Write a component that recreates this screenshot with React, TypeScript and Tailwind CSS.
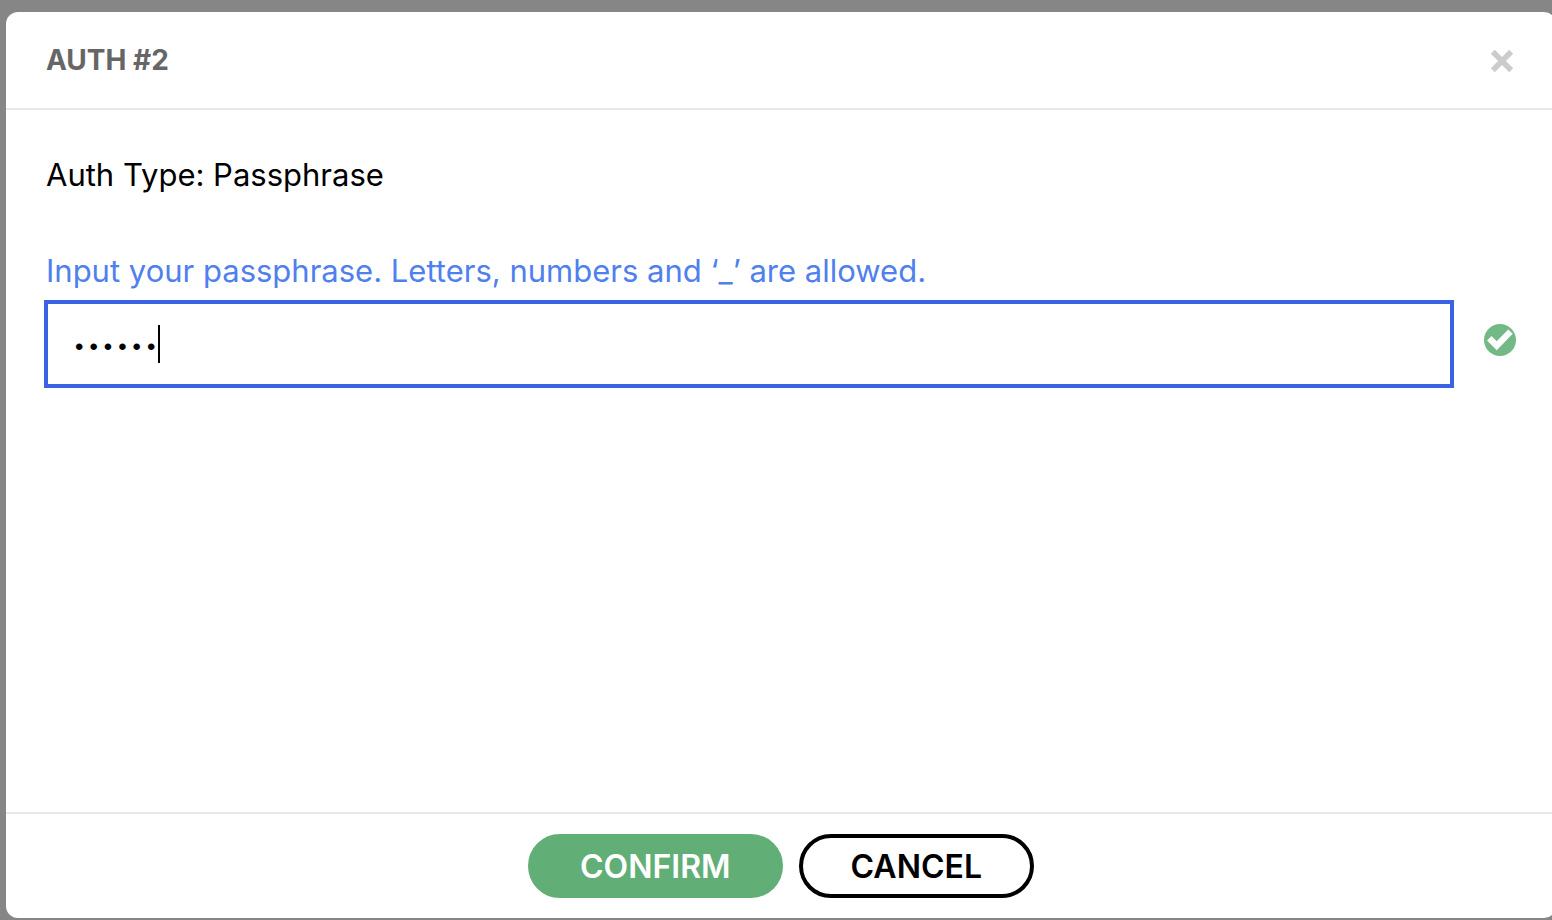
import { useState } from "react";

export default function App() {
  const [passphrase, setPassphrase] = useState("secret");

  return (
    <div className="flex min-h-screen overflow-hidden bg-[#868686] pt-3 pb-0.5 pl-1.5 font-['Inter',sans-serif] text-black">
      <section
        role="dialog"
        aria-labelledby="dialog-title"
        className="-mr-1 flex flex-1 flex-col rounded-xl bg-white"
      >
        <header className="flex items-center justify-between border-b-2 border-[#e8e8e8] py-7 pr-10 pl-10">
          <h1 id="dialog-title" className="text-[28px] leading-10 font-bold text-[#666666]">
            AUTH #2
          </h1>
          <button type="button" aria-label="Close" className="flex items-center p-0.5 pt-1">
            <svg viewBox="0 0 24 24" className="size-6" fill="none" stroke="#cccccc" strokeWidth="5.6">
              <path d="M2.8 2.8 21.2 21.2M21.2 2.8 2.8 21.2" />
            </svg>
          </button>
        </header>

        <main className="flex flex-1 flex-col px-10 pt-10">
          <p className="text-[31px] leading-[50px]">Auth Type: Passphrase</p>
          <label htmlFor="passphrase" className="mt-[46px] text-[31px] leading-[50px] text-[#4f80ee]">
            Input your passphrase. Letters, numbers and ‘_’ are allowed.
          </label>
          <div className="mt-1 -ml-0.5 flex items-center gap-[30px]">
            <div className="relative flex-1">
              <input
                id="passphrase"
                type="password"
                value={passphrase}
                onChange={(e) => setPassphrase(e.target.value)}
                className="block h-22 w-full border-4 border-[#3a62e3] bg-white px-6 pt-2 font-['Liberation_Mono',monospace] text-[24px] caret-transparent outline-none"
              />
              <span aria-hidden="true" className="absolute top-[25px] left-[114px] h-[38px] w-0.5 bg-black" />
            </div>
            <svg viewBox="0 0 32 32" className="mb-2 size-8" role="img" aria-label="Valid">
              <circle cx="16" cy="16" r="16" fill="#72b985" />
              <path d="M5.3 14.3 12.7 21.8 26.5 7.6" fill="none" stroke="#fff" strokeWidth="6.3" />
            </svg>
          </div>
        </main>

        <footer className="flex justify-center gap-4 border-t-2 border-[#e8e8e8] py-5">
          <button
            type="button"
            className="h-16 rounded-full border-4 border-[#61ae76] bg-[#61ae76] px-12 pt-0.5 text-[32px] leading-10 font-semibold text-white"
          >
            CONFIRM
          </button>
          <button
            type="button"
            className="h-16 rounded-full border-4 border-black bg-white px-12 pt-0.5 text-[32px] leading-10 font-semibold"
          >
            CANCEL
          </button>
        </footer>
      </section>
    </div>
  );
}
